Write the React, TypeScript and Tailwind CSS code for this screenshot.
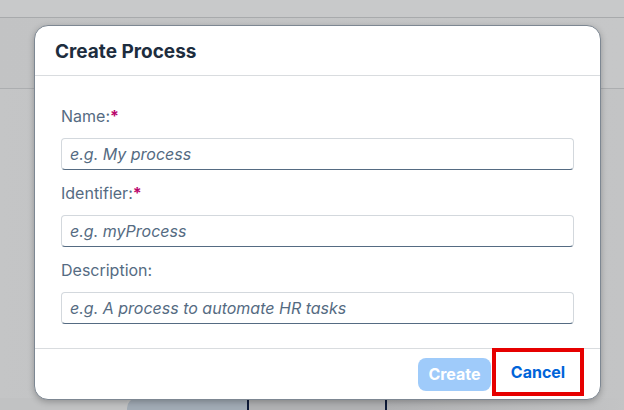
import React from "react";

const fields = [
  { label: "Name:", required: true, placeholder: "e.g. My process" },
  { label: "Identifier:", required: true, placeholder: "e.g. myProcess" },
  { label: "Description:", required: false, placeholder: "e.g. A process to automate HR tasks" },
];

function Field({ label, required, placeholder }: { label: string; required: boolean; placeholder: string }) {
  return (
    <div className="flex flex-col">
      <label className="text-[16px] leading-[20px] text-[#556b82]">
        {label}
        {required && <span className="font-bold text-[#ba066c]">*</span>}
      </label>
      <input
        className="mt-[12px] h-[32px] w-full rounded-[4px] border border-[#d3d8dd] border-b-[#556b82] bg-white px-[8px] text-[16px] italic text-[#1d2d3e] outline-none placeholder:text-[#556b82]"
        placeholder={placeholder}
      />
    </div>
  );
}

export default function App() {
  return (
    <div
      className="relative h-[410px] w-[624px] overflow-hidden bg-[#c3c4c5]"
      style={{ fontFamily: "Inter, 'Noto Sans', Arial, sans-serif" }}
    >
      {/* Backdrop: the dimmed page behind the dialog */}
      <div className="flex h-full flex-col">
        <div className="h-[17px] shrink-0 bg-[#c8c9ca]" />
        <div className="h-px shrink-0 bg-[#a8aaac]" />
        <div className="h-[70px] shrink-0 bg-gradient-to-r from-[#c2c3c4] to-[#c6c7c8]" />
        <div className="h-px shrink-0 bg-[#acaeb0]" />
        <div className="flex-1 bg-gradient-to-r from-[#c4c5c6] via-[#bfc0c1] to-[#c3c4c5]" />
        <div className="flex h-[12px] shrink-0">
          <div className="w-[127px] bg-[#c1c2c3]" />
          <div className="w-[120px] rounded-tl-[10px] bg-[#a1abb5]" />
          <div className="w-[2px] bg-[#0e1b3a]" />
          <div className="w-[136px] bg-[#b0b1b3]" />
          <div className="w-[2px] bg-[#0e1b3a]" />
          <div className="flex-1 bg-gradient-to-r from-[#b0b1b3] to-[#c3c4c5]" />
        </div>
      </div>

      {/* Dialog */}
      <div className="absolute left-[34px] top-[25px] flex h-[375px] w-[567px] flex-col overflow-hidden rounded-[14px] border border-[#7d8792] bg-white shadow-[0_2px_6px_rgba(0,0,0,0.25)]">
        <div className="flex h-[50px] shrink-0 items-center border-b border-[#d9dcdf] px-[20px] pt-[3px]">
          <h1 className="text-[19px] font-bold text-[#1d2d3e]">Create Process</h1>
        </div>

        <div className="flex flex-col gap-[13px] px-[26px] pt-[30px]">
          {fields.map((f) => (
            <Field key={f.label} {...f} />
          ))}
        </div>

        <div className="mt-auto flex h-[51px] shrink-0 items-start justify-end border-t border-[#d9dcdf] pr-[16px]">
          <button className="mt-[9px] h-[33px] w-[73px] rounded-[8px] bg-[#9fcbfa] pb-[2px] text-[16px] font-bold text-white">
            Create
          </button>
          <button className="-mt-px ml-px flex h-[48px] w-[92px] items-center justify-center border-[4px] border-[#e60000] text-[16px] font-bold text-[#0064d9]">
            Cancel
          </button>
        </div>
      </div>
    </div>
  );
}
